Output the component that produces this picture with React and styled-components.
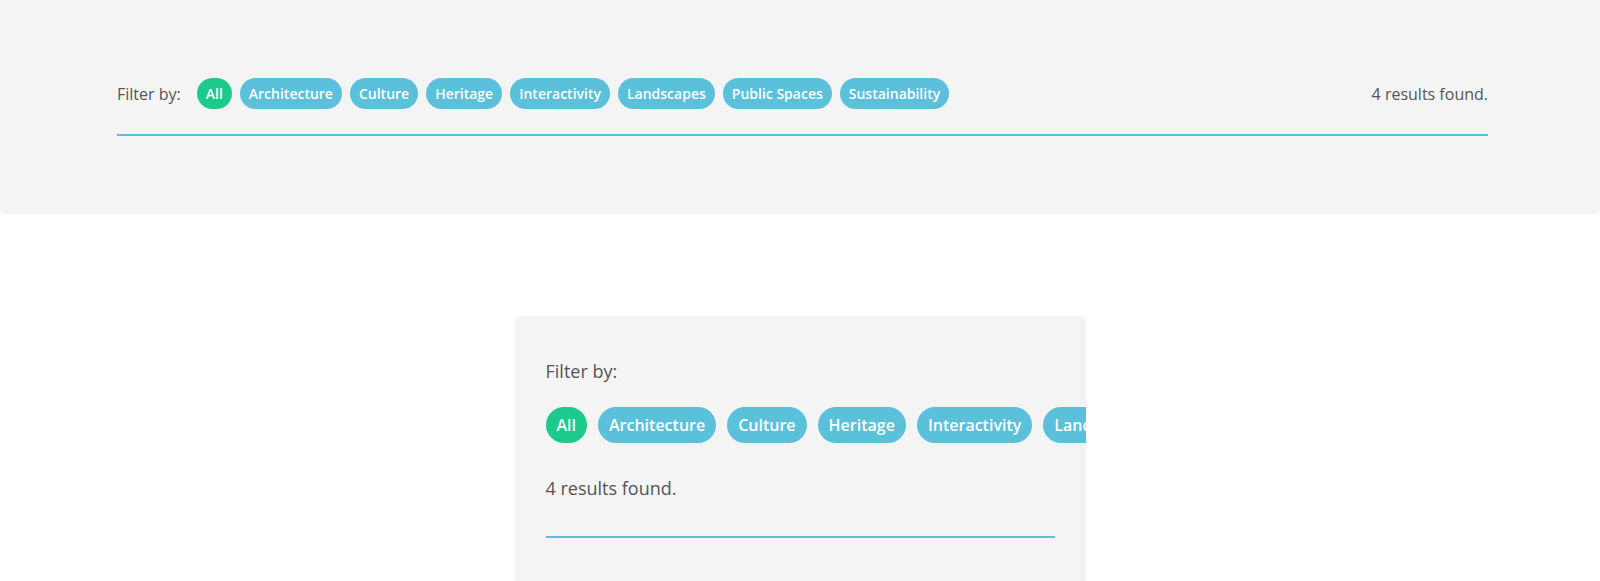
import React from 'react'
import styled, { createGlobalStyle } from 'styled-components'

const GlobalStyle = createGlobalStyle`
   body {
      margin: 0;
      background: #fff;
      font-family: "Open Sans", "Noto Sans", sans-serif;
      color: #555;
   }
`

const categories = ['All', 'Architecture', 'Culture', 'Heritage', 'Interactivity', 'Landscapes', 'Public Spaces', 'Sustainability']

function FilterPills({ large }) {
   return categories.map((name, index) => (
      <Pill key={name} active={index === 0} large={large}>{name}</Pill>
   ))
}

function App() {
   return (
      <>
      <GlobalStyle />
      <Page>
         <WidePanel>
            <WideRow>
               <Label>Filter by:</Label>
               <PillRow>
                  <FilterPills />
               </PillRow>
               <Results>4 results found.</Results>
            </WideRow>
            <Rule />
         </WidePanel>

         <NarrowCard>
            <Label large>Filter by:</Label>
            <PillRow large>
               <FilterPills large />
            </PillRow>
            <Results large>4 results found.</Results>
            <Rule />
         </NarrowCard>
      </Page>
      </>
   )
}

const Page = styled.div`
   display: flex;
   flex-direction: column;
   align-items: center;
   gap: 102px;
`;

const WidePanel = styled.section`
   box-sizing: border-box;
   width: 100%;
   height: 214px;
   padding: 78px 112px 0 117px;
   background: #f4f4f4;
   border-radius: 0 0 6px 6px;
`;

const WideRow = styled.div`
   display: flex;
   align-items: center;
   gap: 16px;
   margin-bottom: 25px;
`;

const Label = styled.div`
   font-size: ${p => (p.large ? '18px' : '16px')};
   line-height: 1.5;
   color: #555;
   flex-shrink: 0;
`;

const PillRow = styled.div`
   display: flex;
   flex-wrap: nowrap;
   gap: ${p => (p.large ? '11px' : '8px')};
   margin: ${p => (p.large ? '22px 0 32px' : '0')};
`;

const Pill = styled.span`
   flex-shrink: 0;
   font-size: ${p => (p.large ? '16px' : '14px')};
   font-weight: 600;
   line-height: ${p => (p.large ? '36px' : '31px')};
   padding: 0 ${p => (p.large ? '11px' : '9px')};
   border-radius: 20px;
   color: #fff;
   background: ${p => (p.active ? '#1ccb8c' : '#5bc0da')};
   white-space: nowrap;
`;

const Results = styled.div`
   font-size: ${p => (p.large ? '18px' : '16px')};
   line-height: 1.5;
   color: #555;
   flex-shrink: 0;
   margin-left: ${p => (p.large ? '0' : 'auto')};
`;

const Rule = styled.div`
   height: 2px;
   background: #5bc0da;
`;

const NarrowCard = styled.section`
   box-sizing: border-box;
   width: 571px;
   padding: 42px 31px 60px;
   background: #f4f4f4;
   border-radius: 6px;
   overflow: hidden;

   ${Rule} {
      margin-top: 34px;
   }
`;

export default App
